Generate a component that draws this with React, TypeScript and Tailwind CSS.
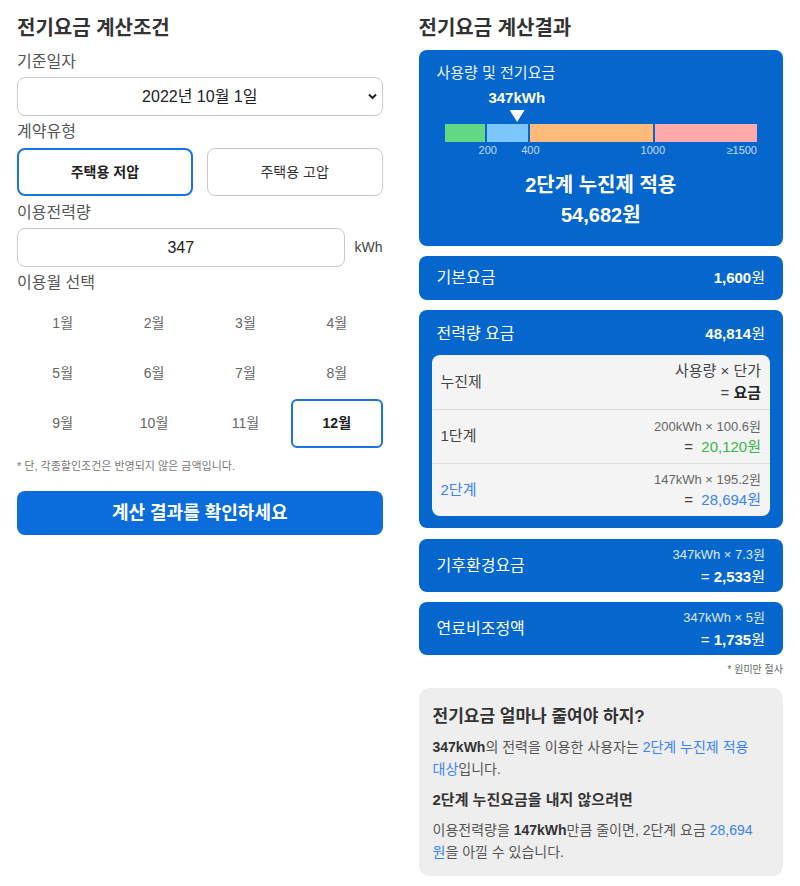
import { useState } from 'react'

const FONT = { fontFamily: '"Liberation Sans", "Noto Sans CJK KR", sans-serif' }

const months = ['1월', '2월', '3월', '4월', '5월', '6월', '7월', '8월', '9월', '10월', '11월', '12월']

const segments = [
  { from: 0, to: 200, color: 'bg-[#63d884]' },
  { from: 200, to: 400, color: 'bg-[#7cc7ff]' },
  { from: 400, to: 1000, color: 'bg-[#ffb978]' },
  { from: 1000, to: 1500, color: 'bg-[#ffa9aa]' },
]

const MAX = 1500

function UsageBar({ usage }: { usage: number }) {
  const pct = (usage / MAX) * 100
  return (
    <div className="mx-[8px]">
      <div className="relative h-[36px]">
        <div
          className="absolute top-0 flex -translate-x-1/2 flex-col items-center"
          style={{ left: `${pct}%` }}
        >
          <span className="text-[15px] font-bold leading-[20px] text-white">{usage}kWh</span>
          <svg width="15" height="12" viewBox="0 0 15 12" className="mt-[2px]">
            <polygon points="0,0 15,0 7.5,12" fill="#ffffff" />
          </svg>
        </div>
      </div>
      <div className="flex h-[18px] gap-[2px]">
        {segments.map((s) => (
          <div
            key={s.to}
            className={`${s.color} h-full`}
            style={{ width: `${((s.to - s.from) / MAX) * 100}%` }}
          />
        ))}
      </div>
      <div className="relative h-[16px] text-[11px] leading-[16px] text-[#c5d9f3]">
        <span className="absolute -translate-x-1/2" style={{ left: `${(200 / MAX) * 100 + 0.5}%` }}>200</span>
        <span className="absolute -translate-x-1/2" style={{ left: `${(400 / MAX) * 100 + 0.8}%` }}>400</span>
        <span className="absolute -translate-x-1/2" style={{ left: `${(1000 / MAX) * 100}%` }}>1000</span>
        <span className="absolute right-0">≥1500</span>
      </div>
    </div>
  )
}

function CalcCard({ label, formula, amount }: { label: string; formula: string; amount: string }) {
  return (
    <div className="flex h-[53px] items-center justify-between rounded-[8px] bg-[#0566ce] pl-[18px] pr-[18px] text-white">
      <span className="text-[16px]">{label}</span>
      <div className="flex flex-col items-end">
        <span className="text-[13px] leading-[22px] text-[#dfe9f7]">{formula}</span>
        <span className="text-[15px] leading-[22px]">
          = <b>{amount}</b>원
        </span>
      </div>
    </div>
  )
}

export default function App() {
  const [contract, setContract] = useState('low')
  const [month, setMonth] = useState(12)

  return (
    <div className="flex w-[800px] gap-[36px] bg-white px-[17px] pt-[14px] pb-[12px] text-[#333]" style={FONT}>
      {/* 계산조건 */}
      <div className="flex w-[366px] flex-col">
        <h2 className="text-[20px] font-bold leading-[28px] text-[#333]">전기요금 계산조건</h2>

        <div className="mt-[8px] text-[16px] leading-[24px] text-[#555]">기준일자</div>
        <div className="relative mt-[3px]">
          <select
            className="h-[39px] w-full appearance-none rounded-[8px] border border-[#c9c9c9] bg-white text-[16px] text-[#222] [text-align-last:center]"
            defaultValue="2022-10-01"
          >
            <option value="2022-10-01">2022년 10월 1일</option>
          </select>
          <svg
            className="pointer-events-none absolute right-[6px] top-[16px]"
            width="9"
            height="7"
            viewBox="0 0 9 7"
          >
            <polyline points="1,1.5 4.5,5 8,1.5" fill="none" stroke="#222" strokeWidth="2" />
          </svg>
        </div>

        <div className="mt-[4px] text-[16px] leading-[24px] text-[#555]">계약유형</div>
        <div className="mt-[4px] grid grid-cols-2 gap-[14px]">
          <button
            onClick={() => setContract('low')}
            className={
              contract === 'low'
                ? 'h-[48px] rounded-[8px] border-2 border-[#1a73e0] bg-white text-[14px] font-bold text-[#222]'
                : 'h-[48px] rounded-[8px] border border-[#c9c9c9] bg-white text-[14px] text-[#333]'
            }
          >
            주택용 저압
          </button>
          <button
            onClick={() => setContract('high')}
            className={
              contract === 'high'
                ? 'h-[48px] rounded-[8px] border-2 border-[#1a73e0] bg-white text-[14px] font-bold text-[#222]'
                : 'h-[48px] rounded-[8px] border border-[#c9c9c9] bg-white text-[14px] text-[#333]'
            }
          >
            주택용 고압
          </button>
        </div>

        <div className="mt-[5px] text-[16px] leading-[24px] text-[#555]">이용전력량</div>
        <div className="mt-[3px] flex items-center gap-[10px]">
          <input
            className="h-[39px] flex-1 rounded-[8px] border border-[#c9c9c9] text-center text-[16px] text-[#222] outline-none"
            defaultValue="347"
          />
          <span className="text-[14px] text-[#444]">kWh</span>
        </div>

        <div className="mt-[4px] text-[16px] leading-[24px] text-[#555]">이용월 선택</div>
        <div className="mt-[4px] grid grid-cols-4 gap-y-[1px]">
          {months.map((m, i) => (
            <button
              key={m}
              onClick={() => setMonth(i + 1)}
              className={
                month === i + 1
                  ? 'h-[49px] rounded-[6px] border-2 border-[#1a73e0] text-[14px] font-bold text-[#222]'
                  : 'h-[49px] text-[14px] text-[#666]'
              }
            >
              {m}
            </button>
          ))}
        </div>

        <p className="mt-[10px] text-[11px] leading-[16px] text-[#777]">* 단, 각종할인조건은 반영되지 않은 금액입니다.</p>

        <button className="mt-[17px] h-[44px] rounded-[8px] bg-[#0b6cdc] text-[18px] font-bold text-white">
          계산 결과를 확인하세요
        </button>
      </div>

      {/* 계산결과 */}
      <div className="flex w-[365px] flex-col">
        <h2 className="text-[20px] font-bold leading-[28px] text-[#333]">전기요금 계산결과</h2>

        <div className="mt-[8px] rounded-[8px] bg-[#0566ce] px-[18px] pt-[13px] pb-[16px] text-white">
          <div className="text-[15px] leading-[20px] text-[#eef4fc]">사용량 및 전기요금</div>
          <div className="mt-[5px]">
            <UsageBar usage={347} />
          </div>
          <div className="mt-[12px] text-center text-[20px] font-bold leading-[30px]">2단계 누진제 적용</div>
          <div className="text-center text-[20px] font-bold leading-[30px]">54,682원</div>
        </div>

        <div className="mt-[10px] flex h-[44px] items-center justify-between rounded-[8px] bg-[#0566ce] px-[18px] text-white">
          <span className="text-[16px]">기본요금</span>
          <span className="text-[15px]">
            <b>1,600</b>원
          </span>
        </div>

        <div className="mt-[10px] rounded-[8px] bg-[#0566ce] px-[13px] pt-[13px] pb-[12px] text-white">
          <div className="flex items-center justify-between px-[5px] leading-[22px]">
            <span className="text-[16px]">전력량 요금</span>
            <span className="text-[15px]">
              <b>48,814</b>원
            </span>
          </div>
          <div className="mt-[10px] rounded-[8px] bg-[#f4f4f4] text-[#444]">
            <div className="flex h-[55px] items-center justify-between border-b border-[#dcdcdc] px-[9px]">
              <span className="text-[15px]">누진제</span>
              <div className="flex flex-col items-end text-[15px] leading-[22px]">
                <span>사용량 × 단가</span>
                <span>
                  = <b className="text-[#222]">요금</b>
                </span>
              </div>
            </div>
            <div className="flex h-[54px] items-center justify-between border-b border-[#dcdcdc] px-[9px]">
              <span className="text-[15px]">1단계</span>
              <div className="flex flex-col items-end">
                <span className="text-[13px] leading-[20px] text-[#666]">200kWh × 100.6원</span>
                <span className="text-[15px] leading-[20px]">
                  = &nbsp;<span className="text-[#3cb54a]">20,120원</span>
                </span>
              </div>
            </div>
            <div className="flex h-[52px] items-center justify-between px-[9px]">
              <span className="text-[15px] text-[#3b82f6]">2단계</span>
              <div className="flex flex-col items-end">
                <span className="text-[13px] leading-[20px] text-[#666]">147kWh × 195.2원</span>
                <span className="text-[15px] leading-[20px]">
                  = &nbsp;<span className="text-[#3b82f6]">28,694원</span>
                </span>
              </div>
            </div>
          </div>
        </div>

        <div className="mt-[11px]">
          <CalcCard label="기후환경요금" formula="347kWh × 7.3원" amount="2,533" />
        </div>
        <div className="mt-[10px]">
          <CalcCard label="연료비조정액" formula="347kWh × 5원" amount="1,735" />
        </div>

        <p className="mt-[8px] text-right text-[10px] leading-[14px] text-[#666]">* 원미만 절사</p>

        <div className="mt-[11px] rounded-[10px] bg-[#eeeeee] pl-[14px] pr-[20px] pt-[16px] pb-[13px] text-[#555]">
          <h3 className="text-[17px] font-bold leading-[26px] text-[#333]">전기요금 얼마나 줄여야 하지?</h3>
          <p className="mt-[6px] text-[14px] leading-[22px]">
            <b className="text-[#333]">347kWh</b>의 전력을 이용한 사용자는{' '}
            <span className="text-[#3b82f6]">2단계 누진제 적용 대상</span>입니다.
          </p>
          <h3 className="mt-[9px] text-[15px] font-bold leading-[22px] text-[#333]">2단계 누진요금을 내지 않으려면</h3>
          <p className="mt-[8px] text-[14px] leading-[22px]">
            이용전력량을 <b className="text-[#333]">147kWh</b>만큼 줄이면, 2단계 요금{' '}
            <span className="text-[#3b82f6]">28,694원</span>을 아낄 수 있습니다.
          </p>
        </div>
      </div>
    </div>
  )
}
